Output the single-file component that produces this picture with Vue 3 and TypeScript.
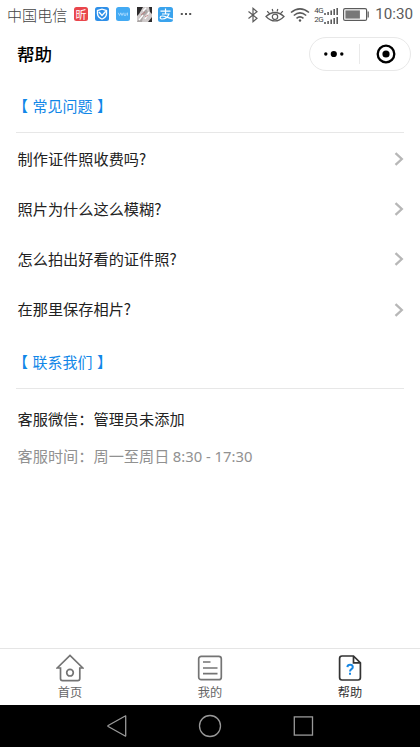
<script setup lang="ts">
interface Tab { id: string; label: string; active?: boolean }

const questions: string[] = [
  '制作证件照收费吗?',
  '照片为什么这么模糊?',
  '怎么拍出好看的证件照?',
  '在那里保存相片?',
]
const tabs: Tab[] = [
  { id: 'home', label: '首页' },
  { id: 'mine', label: '我的' },
  { id: 'help', label: '帮助', active: true },
]
</script>

<template>
  <div class="phone">
    <header class="status">
      <span class="carrier">中国电信</span>
      <div class="notices">
        <span class="app red">昕</span>
        <svg class="app-svg" viewBox="0 0 14 14">
          <rect width="14" height="14" rx="2.5" fill="#2e8fe8" />
          <path d="M7 1.4 12.2 3V6.5C12.2 9.7 9.8 11.7 7 12.8 4.2 11.7 1.8 9.7 1.8 6.5V3Z" fill="#fff" />
          <path d="M7 2.8 10.8 4V6.5C10.8 8.9 9.2 10.4 7 11.4 4.8 10.4 3.2 8.9 3.2 6.5V4Z" fill="#2e8fe8" />
          <path d="M4 5 7 8.4 10.8 4.2" fill="none" stroke="#fff" stroke-width="1.4" />
        </svg>
        <svg class="app-svg" viewBox="0 0 14 14">
          <rect width="14" height="14" rx="2.5" fill="#43aaf3" />
          <path d="M2.3 5.8 3.5 8.5 4.8 5.8 6 8.5 7.2 5.8M8 5.8V8.3H10V5.8M11.5 5.6V8.6" fill="none" stroke="#b5e0ff" stroke-width=".8" />
        </svg>
        <svg class="app-svg photo" viewBox="0 0 15 15">
          <rect width="15" height="15" fill="#cfcaca" />
          <path d="M0 0H6L2 7 0 9ZM12 0H15V7L13 5ZM11 15 15 10V15Z" fill="#2d2b2c" />
          <path d="M0 15 5 7 9 2 11 5 6 10 5 15Z" fill="#aaa5a4" />
          <path d="M2 13 6 8M8 12 12 5M6 4 9 1" stroke="#fff" stroke-width="1.5" />
          <path d="M4 8 8 5M8 10 11 8" stroke="#bd7272" stroke-width=".8" />
        </svg>
        <svg class="app-svg photo" viewBox="0 0 15 15">
          <rect width="15" height="15" rx="2.5" fill="#3aa3ed" />
          <path d="M2.5 4.2H12.5M7.5 1.5V6.8M4 7H11C10 9.6 7.5 12 4.2 12 1.5 12 1.5 9 4.2 9 7.5 9 10.5 11.3 15 12" fill="none" stroke="#fff" stroke-width="1.2" />
        </svg>
        <svg class="more" viewBox="0 0 12 4"><path d="M.8 2h2M5 2h2M9.2 2h2" stroke="#555" stroke-width="1.8" /></svg>
      </div>
      <div class="system">
        <svg class="bt" viewBox="0 0 12 16"><path d="M1.5 4.5 10 11.3 6 14.7V1.3L10 4.7 1.5 11.5" /></svg>
        <svg class="eye" viewBox="0 0 20 16">
          <path d="M1 9.5Q10 1.5 19 9.5Q10 18.5 1 9.5ZM2.2 4.2 4.3 6.5M7.2 2 7.9 4.5M12.8 2 12.1 4.5M17.8 4.2 15.7 6.5" />
          <circle cx="10" cy="9.8" r="2.7" />
        </svg>
        <svg class="wifi" viewBox="0 0 20 16">
          <path d="M1 5.5Q10-1.8 19 5.5M3.8 8.5Q10 3.4 16.2 8.5M6.5 11.3Q10 8.5 13.5 11.3" />
          <circle cx="10" cy="13.5" r="1.2" fill="#555" stroke="none" />
        </svg>
        <div class="cells">
          <div v-for="net in ['4G', '2G']" :key="net" class="cell">
            <span>{{ net }}</span>
            <svg viewBox="0 0 14 8"><path d="M1 6v2M4.1 5v3M7.2 3.5V8M10.2 2V8M13.2 1V8" /></svg>
          </div>
        </div>
        <svg class="battery" viewBox="0 0 26 13">
          <rect x=".6" y=".6" width="23" height="11.8" rx="1.5" />
          <rect x="2.4" y="2.4" width="14.5" height="8.2" fill="#777" stroke="none" />
          <path d="M25.2 3.5v6" />
        </svg>
        <span class="time">10:30</span>
      </div>
    </header>

    <div class="titlebar">
      <h1>帮助</h1>
      <div class="capsule">
        <svg class="dots" viewBox="0 0 20 8"><circle cx="1.8" cy="4" r="1.7" /><circle cx="9.8" cy="4" r="3.1" /><circle cx="17.8" cy="4" r="1.7" /></svg>
        <i></i>
        <svg class="target" viewBox="0 0 20 20"><circle cx="10" cy="10" r="8.3" fill="none" stroke="#000" stroke-width="2.3" /><circle cx="10" cy="10" r="3.6" /></svg>
      </div>
    </div>

    <main>
      <h2><span>【</span>常见问题<span>】</span></h2>
      <ul>
        <li v-for="q in questions" :key="q">
          <span>{{ q }}</span>
          <svg viewBox="0 0 10 14"><path d="M1.5 1.2 7.8 7 1.5 12.8" /></svg>
        </li>
      </ul>
      <h2 class="contact"><span>【</span>联系我们<span>】</span></h2>
      <div class="info">
        <p>客服微信：管理员未添加</p>
        <p class="hours">客服时间：周一至周日 <span>8:30 - 17:30</span></p>
      </div>
    </main>

    <nav class="tabs">
      <a v-for="tab in tabs" :key="tab.id" :class="{ active: tab.active }">
        <svg v-if="tab.id === 'home'" viewBox="0 0 28 28">
          <path d="M4.5 14H1.2L14 1.5 26.8 14H23.8V24.5Q23.8 26.6 21.7 26.6H6.6Q4.5 26.6 4.5 24.5Z" />
          <circle cx="14" cy="18.7" r="3.3" />
        </svg>
        <svg v-else-if="tab.id === 'mine'" viewBox="0 0 28 28">
          <rect x="2.7" y="2.3" width="22.6" height="23.4" rx="2.5" />
          <path d="M7 8H14.5M7 14H21.5M7 19.7H21.5" />
        </svg>
        <svg v-else viewBox="0 0 28 28">
          <path d="M17.5 2H6Q3.6 2 3.6 4.4V23.6Q3.6 26 6 26H22Q24.4 26 24.4 23.6V8.8ZM17.5 2V8.8H24.4" />
          <path class="question" d="M11.4 13.1Q11.6 10.7 14.1 10.7T16.8 13Q16.8 14.3 15.4 15.2T14 17.6M14 18.7V20.7" />
        </svg>
        <span>{{ tab.label }}</span>
      </a>
    </nav>

    <footer class="android">
      <svg viewBox="0 0 24 24"><path d="M20.2 2Q20.7 1.7 20.7 2.3V21.7Q20.7 22.3 20.2 22L3.2 12.5Q2.5 12 3.2 11.5Z" /></svg>
      <svg viewBox="0 0 24 24"><circle cx="12" cy="12" r="10.5" /></svg>
      <svg viewBox="0 0 24 24"><rect x="2.3" y="2.9" width="18.2" height="18.2" /></svg>
    </footer>
  </div>
</template>

<style>
body { margin: 0; background: #fff; }
</style>
<style scoped>
* { box-sizing: border-box; }
.phone { width: 420px; height: 747px; display: flex; flex-direction: column; background: #fff; color: #222; font-family: "Noto Sans CJK SC", sans-serif; font-size: 15.2px; overflow: hidden; }
svg { display: block; flex: none; }
.status { height: 29px; padding: 0 7px; display: flex; align-items: center; color: #666; }
.carrier { width: 67px; font-size: 15.1px; font-weight: 300; line-height: 29px; white-space: nowrap; color: #444; }
.notices { display: flex; align-items: center; gap: 7px; padding-bottom: 1px; }
.app { width: 14px; height: 14px; border-radius: 2.5px; display: flex; align-items: center; justify-content: center; line-height: 14px; color: #fff; }
.red { background: #e9464c; font-size: 11px; }
.app-svg { width: 14px; height: 14px; }
.photo { width: 15px; height: 15px; }
.photo + .photo { margin-left: -1px; }
.more { width: 12px; height: 4px; }
.system { display: flex; align-items: center; margin-left: auto; }
.system svg { fill: none; stroke: #5b5b5b; stroke-width: 1.2; }
.bt { width: 12px; height: 16px; }
.eye { width: 20px; height: 16px; margin-left: 6px; }
.wifi { width: 20px; height: 16px; margin-left: 5px; }
.system .wifi { stroke-width: 1.6; }
.cells { width: 24px; margin-left: 4px; display: flex; flex-direction: column; }
.cell { display: flex; height: 9px; align-items: flex-end; }
.cell span { width: 10px; font: 8px/9px Roboto, sans-serif; letter-spacing: -.3px; color: #444; }
.cell svg { width: 14px; height: 8px; stroke-width: 1.6; }
.battery { width: 26px; height: 13px; margin-left: 5px; }
.time { margin-left: 6px; font: 15.2px/29px Roboto, sans-serif; color: #5b5b5b; }
.titlebar { height: 49px; padding: 0 9px 0 17px; display: flex; align-items: center; justify-content: space-between; }
h1 { margin: 0; font-size: 17.6px; font-weight: 500; line-height: 26px; color: #000; }
.capsule { width: 102px; height: 34px; border: 1px solid #e8e8e8; border-radius: 17px; display: flex; align-items: center; padding-left: 14px; }
.dots { width: 20px; height: 8px; }
.capsule i { width: 1px; height: 20px; background: #eaeaea; margin-left: 15px; }
.target { width: 20px; height: 20px; margin-left: 16px; }
main { flex: 1; padding: 0 16px; }
h2 { margin: 0; height: 55px; line-height: 55px; display: flex; gap: 4.5px; border-bottom: 1px solid #e7e7e7; font-size: 15px; font-weight: 400; color: #1187e8; }
h2 span { width: 12px; display: flex; justify-content: flex-end; }
h2 span:last-child { justify-content: flex-start; }
ul { list-style: none; margin: 0; padding: 1px 0 0; }
li { height: 50.2px; padding: 0 0 0 1.5px; display: flex; align-items: center; justify-content: space-between; }
li span { padding-bottom: 3px; }
li svg { width: 10px; height: 14px; fill: none; stroke: #b7b7b7; stroke-width: 2.3; }
.contact { height: 54px; line-height: 53px; }
.info { padding: 11px 1.5px; }
p { margin: 0; height: 37px; line-height: 37px; }
.hours { color: #919191; }
.hours span { font-family: "Noto Sans", sans-serif; font-size: 14.8px; }
.tabs { height: 57px; border-top: 1px solid #e5e5e5; display: grid; grid-template-columns: repeat(3, 1fr); }
.tabs a { display: flex; flex-direction: column; align-items: center; padding-top: 5px; color: #666; }
.tabs svg { width: 28px; height: 28px; fill: none; stroke: #747474; stroke-width: 1.7; }
.tabs span { font-size: 12.2px; line-height: 20px; }
.tabs .active { color: #333; }
.tabs .active svg { stroke: #333; }
.tabs .question { stroke: #1687e4; stroke-width: 2; }
.android { height: 42px; background: #000; display: flex; align-items: center; justify-content: center; gap: 69.5px; }
.android svg { width: 24px; height: 24px; fill: none; stroke: #999; stroke-width: 1.3; }
</style>
